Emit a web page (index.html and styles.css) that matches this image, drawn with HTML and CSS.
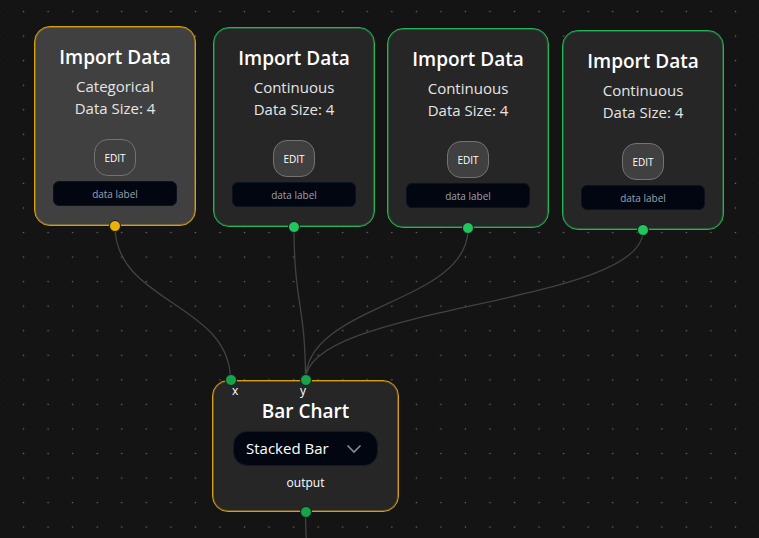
FILE: index.html
```html
<!DOCTYPE html>
<html lang="en">
<head>
<meta charset="utf-8">
<title>Chart flow</title>
<link rel="stylesheet" href="styles.css">
</head>
<body>
<main class="canvas">
  <svg class="wires" aria-hidden="true">
    <defs>
      <pattern id="dots" x="11.3" y="-0.7" width="24.55" height="24.55" patternUnits="userSpaceOnUse">
        <circle cx="12.27" cy="12.27" r="0.8" fill="#6a6a6a"/>
      </pattern>
    </defs>
    <rect width="100%" height="100%" fill="url(#dots)"/>
    <g class="edges">
      <path d="M115 226C115 303 230.500 303 230.500 380"/>
      <path d="M294 227C294 304 305.500 304 305.500 380"/>
      <path d="M468 229C468 304 305.500 304 305.500 380"/>
      <path d="M643 231C643 305 305.500 305 305.500 380"/>
      <path d="M305.500 512C305.500 528 306.500 540 307 560"/>
    </g>
  </svg>

  <section class="node import selected n1">
    <h2>Import Data</h2>
    <p>Categorical</p>
    <p>Data Size: 4</p>
    <button class="edit" type="button">EDIT</button>
    <input class="label" type="text" placeholder="data label" aria-label="Data label 1">
    <span class="port out"></span>
  </section>
  <section class="node import n2">
    <h2>Import Data</h2>
    <p>Continuous</p>
    <p>Data Size: 4</p>
    <button class="edit" type="button">EDIT</button>
    <input class="label" type="text" placeholder="data label" aria-label="Data label 2">
    <span class="port out"></span>
  </section>
  <section class="node import n3">
    <h2>Import Data</h2>
    <p>Continuous</p>
    <p>Data Size: 4</p>
    <button class="edit" type="button">EDIT</button>
    <input class="label" type="text" placeholder="data label" aria-label="Data label 3">
    <span class="port out"></span>
  </section>
  <section class="node import n4">
    <h2>Import Data</h2>
    <p>Continuous</p>
    <p>Data Size: 4</p>
    <button class="edit" type="button">EDIT</button>
    <input class="label" type="text" placeholder="data label" aria-label="Data label 4">
    <span class="port out"></span>
  </section>

  <section class="node chart">
    <span class="port in-x"></span>
    <span class="port in-y"></span>
    <span class="port-name name-x">x</span>
    <span class="port-name name-y">y</span>
    <h2>Bar Chart</h2>
    <div class="picker">
      <select aria-label="Chart type">
        <option>Stacked Bar</option>
        <option>Grouped Bar</option>
      </select>
      <svg class="chevron" viewBox="0 0 16 10" aria-hidden="true"><path d="M1.500 1.500L8 8L14.500 1.500"/></svg>
    </div>
    <span class="output">output</span>
    <span class="port out"></span>
  </section>
</main>
</body>
</html>
```
FILE: styles.css
```css
* {
  box-sizing: border-box;
}

body {
  margin: 0;
  background: #141414;
  color: #fff;
  font-family: "Open Sans", "Noto Sans", sans-serif;
}

.canvas {
  position: relative;
  min-height: 100vh;
  overflow: hidden;
}

.wires {
  position: absolute;
  inset: 0;
  width: 100%;
  height: 100%;
}

.edges {
  fill: none;
  stroke: #424242;
  stroke-width: 1.3;
}

.node {
  --line: #22b455;
  --port: #22c55e;
  position: absolute;
  display: flex;
  flex-direction: column;
  align-items: center;
  border: 1px solid var(--line);
  border-radius: 16px;
  background: #262626;
  box-shadow: inset 0 0 0 1px color-mix(in srgb, var(--line) 40%, transparent);
}

.import {
  width: 162px;
  padding: 17px 18px 19px;
}

.selected {
  --line: #d6a010;
  --port: #eab308;
  background: #404040;
}

.n1 { left: 34px; top: 26px; }
.n2 { left: 213px; top: 27px; }
.n3 { left: 387px; top: 28px; }
.n4 { left: 562px; top: 30px; }

.chart {
  --line: #d6a010;
  --port: #16a34a;
  left: 212px;
  top: 380px;
  width: 187px;
  padding: 18px 20px 17px;
}

h2,
p {
  margin: 0;
  white-space: nowrap;
}

h2 {
  font-size: 19px;
  line-height: 26px;
  font-weight: 600;
}

.chart h2 {
  line-height: 24px;
}

.import h2 {
  margin-bottom: 5px;
}

p {
  color: #e5e5e5;
  font-size: 15px;
  line-height: 22px;
}

.edit {
  width: 42px;
  height: 37px;
  margin: 20px 0 5px;
  padding: 0;
  border: 1px solid #737373;
  border-radius: 14px;
  background: #404040;
  color: #fff;
  font: 500 10px "Open Sans", "Noto Sans", sans-serif;
}

.label {
  width: 100%;
  height: 25px;
  padding: 0;
  border: 1px solid #0b1220;
  border-radius: 6px;
  background: #020610;
  color: #fff;
  font: 10px "Open Sans", "Noto Sans", sans-serif;
  text-align: center;
}

.label::placeholder {
  color: #9ca3af;
  opacity: 1;
}

.port {
  position: absolute;
  width: 12px;
  height: 12px;
  border: 1px solid #1a1a1a;
  border-radius: 50%;
  background: var(--port);
  transform: translateX(-50%);
}

.out {
  left: 50%;
  bottom: -7px;
}

.in-x {
  left: 18px;
  top: -7px;
}

.in-y {
  left: 50%;
  top: -7px;
}

.port-name {
  position: absolute;
  top: 4px;
  font-size: 12px;
  line-height: 12px;
}

.name-x { left: 19px; }
.name-y { left: 87px; }

.picker {
  position: relative;
  width: 100%;
  margin: 8px 0 7px;
}

select {
  display: block;
  width: 100%;
  height: 35px;
  padding: 0 12px 2px;
  appearance: none;
  border: 1px solid #101c2c;
  border-radius: 14px;
  background: #020610;
  color: #fff;
  font: 15px "Open Sans", "Noto Sans", sans-serif;
}

.chevron {
  position: absolute;
  right: 16px;
  top: 13px;
  width: 16px;
  height: 10px;
  fill: none;
  stroke: #8b8b93;
  stroke-width: 1.6;
  pointer-events: none;
}

.output {
  margin: 1px 0 2px;
  font-size: 12px;
  line-height: 18px;
}
```
